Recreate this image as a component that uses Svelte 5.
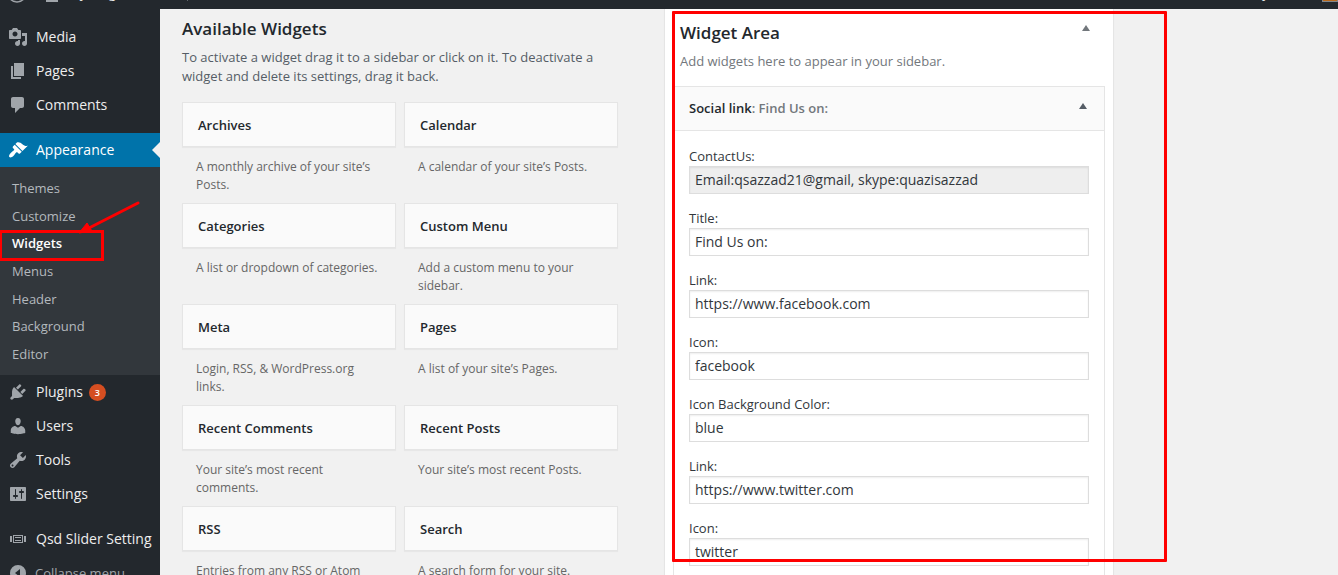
<script>
  const icons = {
    media: 'M13 11V4c0-.55-.45-1-1-1h-1.67L9 1H5L3.67 3H2c-.55 0-1 .45-1 1v7c0 .55.45 1 1 1h10c.55 0 1-.45 1-1zM7 4.5c1.38 0 2.5 1.12 2.5 2.5S8.38 9.5 7 9.5 4.5 8.38 4.5 7 5.62 4.5 7 4.5zM14 6h5v10.5c0 1.38-1.12 2.5-2.5 2.5S14 17.88 14 16.5s1.12-2.5 2.5-2.5c.17 0 .34.02.5.05V9h-3V6zm-4 8.05V13h2v3.5c0 1.38-1.12 2.5-2.5 2.5S7 17.88 7 16.5 8.12 14 9.5 14c.17 0 .34.02.5.05z',
    page: 'M6 15V2h10v13H6zm-1 1h8v2H3V5h2v11z',
    comments: 'M5 2h9c1.1 0 2 .9 2 2v7c0 1.1-.9 2-2 2h-2l-5 5v-5H5c-1.1 0-2-.9-2-2V4c0-1.1.9-2 2-2z',
    appearance: 'M14.48 11.06L7.41 3.99l1.5-1.5c.5-.56 2.3-.47 3.51.32 1.21.8 1.43 1.28 2.91 2.1 1.18.64 2.45 1.26 4.45.85zm-.71.71L6.7 4.7 4.93 6.47c-.39.39-.39 1.02 0 1.41l1.06 1.06c.39.39.39 1.03 0 1.42-.6.6-1.43 1.11-2.21 1.69-.35.26-.7.53-1.01.84C1.43 14.23.4 16.08 1.4 17.07c.99 1 2.84-.03 4.18-1.36.31-.31.58-.66.85-1.02.57-.78 1.08-1.61 1.69-2.21.39-.39 1.02-.39 1.41 0l1.06 1.06c.39.39 1.02.39 1.41 0z',
    plugins: 'M13.11 4.36L9.87 7.6 8 5.73l3.24-3.24c.35-.34 1.05-.2 1.56.32.52.51.66 1.21.31 1.55zm-8 1.77l.91-1.12 9.01 9.01-1.19.84c-.71.71-2.63 1.16-3.82 1.16H6.14L4.9 17.26c-.59.59-1.54.59-2.12 0-.59-.58-.59-1.53 0-2.12l1.24-1.24v-3.88c0-1.13.4-3.19 1.09-3.89zm7.26 3.97l3.24-3.24c.34-.35 1.04-.21 1.55.31.52.51.66 1.21.31 1.55l-3.24 3.25z',
    users: 'M10 9.25c-2.27 0-2.73-3.44-2.73-3.44C7 4.02 7.82 2 9.97 2c2.16 0 2.98 2.02 2.71 3.81 0 0-.41 3.44-2.68 3.44zm0 2.57L12.72 10c2.39 0 4.52 2.33 4.52 4.53v2.49s-3.65 1.13-7.24 1.13c-3.65 0-7.24-1.13-7.24-1.13v-2.49c0-2.25 1.94-4.48 4.47-4.48z',
    tools: 'M16.68 9.77c-1.34 1.34-3.3 1.67-4.95.99l-5.41 6.52c-.99.99-2.59.99-3.58 0s-.99-2.59 0-3.57l6.52-5.42c-.68-1.65-.35-3.61.99-4.95 1.28-1.28 3.12-1.62 4.72-1.06l-2.89 2.89 2.82 2.82 2.86-2.87c.53 1.58.18 3.39-1.08 4.65zM3.81 16.21c.4.39 1.04.39 1.43 0 .4-.4.4-1.04 0-1.43-.39-.4-1.03-.4-1.43 0-.39.39-.39 1.03 0 1.43z',
    settings: 'M18 16V4c0-.55-.45-1-1-1H3c-.55 0-1 .45-1 1v12c0 .55.45 1 1 1h14c.55 0 1-.45 1-1zM8 11h1c.55 0 1 .45 1 1s-.45 1-1 1H8v1.5c0 .28-.22.5-.5.5s-.5-.22-.5-.5V13H6c-.55 0-1-.45-1-1s.45-1 1-1h1V5.5c0-.28.22-.5.5-.5s.5.22.5.5V11zm5-2h-1c-.55 0-1-.45-1-1s.45-1 1-1h1V5.5c0-.28.22-.5.5-.5s.5.22.5.5V7h1c.55 0 1 .45 1 1s-.45 1-1 1h-1v5.5c0 .28-.22.5-.5.5s-.5-.22-.5-.5V9z',
    slider: 'M2 7h2v6H2zM16 7h2v6h-2zM5 6h10v8H5zM6 7v6h8V7zM7 8h6v1H7zM7 11h6v1H7z',
    collapse: 'M10 2a8 8 0 1 0 0 16 8 8 0 0 0 0-16zM12 6v8l-5-4z'
  };

  const menu = [
    { label: 'Media', icon: 'media' },
    { label: 'Pages', icon: 'page' },
    { label: 'Comments', icon: 'comments' },
    { separator: true },
    {
      label: 'Appearance',
      icon: 'appearance',
      children: ['Themes', 'Customize', 'Widgets', 'Menus', 'Header', 'Background', 'Editor']
    },
    { label: 'Plugins', icon: 'plugins', count: 3 },
    { label: 'Users', icon: 'users' },
    { label: 'Tools', icon: 'tools' },
    { label: 'Settings', icon: 'settings' },
    { separator: true },
    { label: 'Qsd Slider Setting', icon: 'slider' }
  ];

  const widgets = [
    ['Archives', 'A monthly archive of your site’s Posts.'],
    ['Calendar', 'A calendar of your site’s Posts.'],
    ['Categories', 'A list or dropdown of categories.'],
    ['Custom Menu', 'Add a custom menu to your sidebar.'],
    ['Meta', 'Login, RSS, & WordPress.org links.'],
    ['Pages', 'A list of your site’s Pages.'],
    ['Recent Comments', 'Your site’s most recent comments.'],
    ['Recent Posts', 'Your site’s most recent Posts.'],
    ['RSS', 'Entries from any RSS or Atom feed.'],
    ['Search', 'A search form for your site.']
  ];

  const fields = [
    { label: 'ContactUs:', value: 'Email:qsazzad21@gmail, skype:quazisazzad', readonly: true },
    { label: 'Title:', value: 'Find Us on:' },
    { label: 'Link:', value: 'https://www.facebook.com' },
    { label: 'Icon:', value: 'facebook' },
    { label: 'Icon Background Color:', value: 'blue' },
    { label: 'Link:', value: 'https://www.twitter.com' },
    { label: 'Icon:', value: 'twitter' }
  ];
</script>

{#snippet glyph(name)}
  <svg class="icon" viewBox="0 0 20 20" aria-hidden="true"><path fill-rule="evenodd" d={icons[name]} /></svg>
{/snippet}

<div class="screen">
  <header class="adminbar">
    <div class="barrow">
      <svg class="icon logo" viewBox="0 0 20 20" aria-hidden="true">
        <circle cx="10" cy="10" r="9" fill="none" stroke="currentColor" stroke-width="1.5" />
        <path d="M3 7l5 11 2-6 3 6 4-11-2 0-1 5-3-6-2 5z" />
      </svg>
      <svg class="icon" viewBox="0 0 20 20" aria-hidden="true"><path d="M10 4l8 7h-2v8H4v-8H2z" /></svg>
      <span>My blog</span>
      <span class="bubble">{@render glyph('comments')}</span>
      <span class="howdy">Howdy, admin</span>
      <span class="avatar"></span>
    </div>
  </header>

  <div class="body">
    <nav class="sidebar">
      <ul class="menu">
        {#each menu as item}
          {#if item.separator}
            <li class="separator"></li>
          {:else}
            <li>
              <a href="#{item.icon}" class="entry" class:current={item.children}>
                {@render glyph(item.icon)}
                <span>{item.label}</span>
                {#if item.count}<span class="count">{item.count}</span>{/if}
              </a>
              {#if item.children}
                <ul class="submenu">
                  {#each item.children as child}
                    <li class:selected={child === 'Widgets'}>
                      <a href="#{child}">{child}</a>
                      {#if child === 'Widgets'}
                        <span class="mark"></span>
                        <svg class="pointer" viewBox="0 0 66 36" aria-hidden="true">
                          <path d="M61 4L12 29" stroke="#f00" stroke-width="3" stroke-linecap="round" />
                          <path d="M2 34L10 24L15 32z" fill="#f00" stroke="#f00" stroke-linejoin="round" />
                        </svg>
                      {/if}
                    </li>
                  {/each}
                </ul>
              {/if}
            </li>
          {/if}
        {/each}
      </ul>
      <button class="entry collapse">
        {@render glyph('collapse')}
        <span>Collapse menu</span>
      </button>
    </nav>

    <main class="content">
      <section class="available">
        <h2>Available Widgets</h2>
        <p class="intro">
          To activate a widget drag it to a sidebar or click on it. To deactivate a widget and delete its
          settings, drag it back.
        </p>
        <div class="cards">
          {#each widgets as [name, about]}
            <article>
              <h3>{name}</h3>
              <p>{about}</p>
            </article>
          {/each}
        </div>
      </section>

      <section class="area">
        <header class="areahead">
          <h2>Widget Area</h2>
          <button class="toggle" aria-label="Toggle widget area"></button>
        </header>
        <p class="hint">Add widgets here to appear in your sidebar.</p>
        <div class="widget">
          <header class="widgethead">
            <h3>Social link<span>: Find Us on:</span></h3>
            <button class="toggle dark" aria-label="Toggle widget"></button>
          </header>
          <form>
            {#each fields as field, i}
              <div class="field">
                <label for="field-{i}">{field.label}</label>
                <input id="field-{i}" type="text" value={field.value} readonly={field.readonly} />
              </div>
            {/each}
          </form>
        </div>
        <div class="frame"></div>
      </section>
    </main>
  </div>
</div>

<style>
  :global(body) {
    background: #f1f1f1;
  }
  .screen {
    height: 100vh;
    overflow: hidden;
    display: flex;
    flex-direction: column;
    font: 13px/19px 'Open Sans', sans-serif;
    color: #32373c;
  }
  .screen * {
    box-sizing: border-box;
  }
  ul,
  h2,
  h3,
  p {
    margin: 0;
    padding: 0;
    list-style: none;
  }
  h2 {
    font-size: 17px;
    line-height: 24px;
    font-weight: 600;
    color: #23282d;
  }
  h3 {
    font-size: 13px;
    line-height: 18px;
    font-weight: 600;
    color: #23282d;
  }
  a {
    color: inherit;
    text-decoration: none;
  }
  button {
    border: 0;
    background: none;
    padding: 0;
    font: inherit;
    cursor: pointer;
  }
  .icon {
    width: 20px;
    height: 20px;
    flex: none;
    fill: currentColor;
    color: #a0a5aa;
  }

  .adminbar {
    flex: none;
    height: 9px;
    overflow: hidden;
    display: flex;
    align-items: flex-end;
    background: #23282d;
    color: #eee;
  }
  .barrow {
    flex: 1;
    height: 32px;
    padding-left: 7px;
    display: flex;
    align-items: center;
    line-height: 32px;
  }
  .logo {
    margin-right: 15px;
  }
  .logo + .icon {
    margin-right: 6px;
  }
  .bubble {
    display: flex;
    margin-left: 64px;
  }
  .howdy {
    margin-left: auto;
    margin-right: 8px;
  }
  .avatar {
    width: 16px;
    height: 18px;
    border: 1px solid #82878c;
    background: #b8691c;
  }

  .body {
    flex: 1;
    min-height: 0;
    display: flex;
  }
  .sidebar {
    flex: none;
    width: 160px;
    padding-top: 11px;
    background: #23282d;
    color: #eee;
  }
  .separator {
    height: 11px;
  }
  .entry {
    position: relative;
    width: 100%;
    height: 34px;
    padding-left: 8px;
    display: flex;
    align-items: center;
    gap: 8px;
    font-size: 14px;
    line-height: 18px;
    white-space: nowrap;
  }
  .current {
    background: #0073aa;
    color: #fff;
  }
  .current .icon {
    color: #fff;
  }
  .current::after {
    content: '';
    position: absolute;
    right: 0;
    top: 9px;
    border: 8px solid transparent;
    border-right-color: #f1f1f1;
    border-left: 0;
  }
  .count {
    width: 17px;
    height: 17px;
    margin-left: -2px;
    border-radius: 50%;
    background: #d54e21;
    color: #fff;
    font-size: 9px;
    line-height: 17px;
    font-weight: 600;
    text-align: center;
  }
  .submenu {
    min-height: 208px;
    padding: 8px 0 7px;
    display: grid;
    grid-auto-rows: 1fr;
    background: #32373c;
    color: #b4b9be;
  }
  .submenu li {
    position: relative;
    padding-left: 12px;
    display: flex;
    align-items: center;
  }
  .submenu .selected {
    color: #fff;
    font-weight: 600;
  }
  .mark {
    position: absolute;
    left: -1px;
    top: 0;
    width: 105px;
    height: 31px;
    border: 3px solid #f00;
    z-index: 1;
  }
  .pointer {
    position: absolute;
    left: 77px;
    top: -31px;
    width: 66px;
    height: 36px;
    z-index: 1;
  }
  .collapse {
    color: #a0a5aa;
    font-size: 13px;
    gap: 7px;
  }

  .content {
    flex: 1;
    min-width: 0;
    padding-left: 22px;
    display: grid;
    grid-template-columns: minmax(0, 436fr) minmax(0, 450fr) minmax(0, 178fr);
    column-gap: 46px;
  }
  .available {
    padding-top: 8px;
  }
  .intro {
    margin: 7px 0 16px;
    padding-right: 8px;
    color: #555d66;
  }
  .cards {
    display: grid;
    grid-template-columns: 1fr 1fr;
    column-gap: 8px;
    grid-auto-rows: minmax(101px, auto);
  }
  .cards h3 {
    padding: 13px 15px 12px;
    border: 1px solid #e5e5e5;
    background: #fafafa;
    box-shadow: 0 1px 1px rgba(0, 0, 0, 0.04);
  }
  .cards p {
    padding: 11px 14px 0;
    font-size: 12px;
    line-height: 18px;
    color: #666;
  }

  .area {
    position: relative;
    padding: 0 8px;
    border: 1px solid #e5e5e5;
    border-width: 0 1px;
    background: #fff;
    box-shadow: 0 1px 1px rgba(0, 0, 0, 0.04);
  }
  .areahead {
    padding: 12px 14px 0 7px;
    display: flex;
    justify-content: space-between;
  }
  .hint {
    margin: 7px 7px 15px;
    color: #72777c;
  }
  .toggle {
    width: 10px;
    height: 14px;
    display: flex;
    align-items: center;
    justify-content: center;
    color: #72777c;
  }
  .toggle::before {
    content: '';
    border: 4px solid transparent;
    border-bottom: 6px solid currentColor;
    border-top: 0;
  }
  .dark {
    color: #555d66;
  }
  .widget {
    border: 1px solid #e5e5e5;
  }
  .widgethead {
    padding: 12px 16px 13px 15px;
    display: flex;
    justify-content: space-between;
    background: #fafafa;
    border-bottom: 1px solid #e5e5e5;
  }
  .widgethead span {
    color: #72777c;
  }
  form {
    padding: 16px 15px;
    display: grid;
    gap: 15px;
  }
  .field {
    display: flex;
    flex-direction: column;
  }
  input {
    width: 100%;
    height: 28px;
    padding: 0 5px 2px;
    border: 1px solid #ddd;
    border-radius: 0;
    background: #fff;
    box-shadow: inset 0 1px 2px rgba(0, 0, 0, 0.07);
    color: #32373c;
    font: 14px/20px 'Open Sans', sans-serif;
  }
  input:read-only {
    background: #eee;
  }
  .frame {
    position: absolute;
    left: 7px;
    right: -54px;
    top: 2px;
    height: 551px;
    border: 3px solid #f00;
    border-radius: 1px;
    pointer-events: none;
  }
</style>
